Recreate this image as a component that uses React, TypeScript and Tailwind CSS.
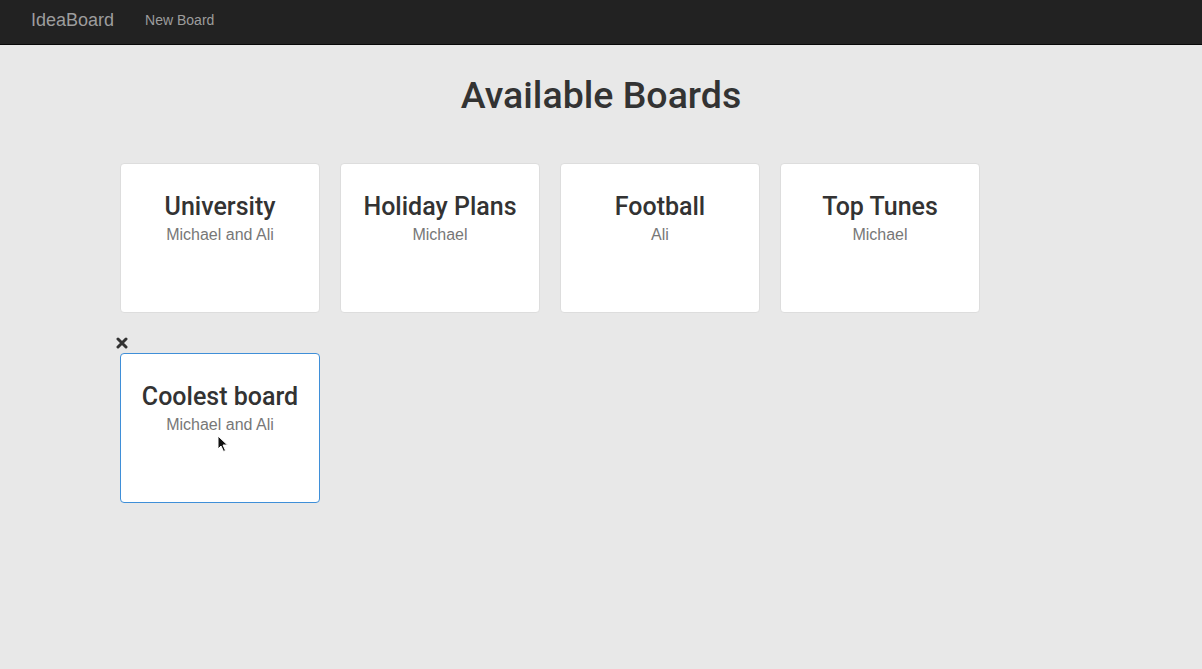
const boards = [
  { title: "University", owners: "Michael and Ali" },
  { title: "Holiday Plans", owners: "Michael" },
  { title: "Football", owners: "Ali" },
  { title: "Top Tunes", owners: "Michael" },
  { title: "Coolest board", owners: "Michael and Ali", active: true },
];

function CloseIcon() {
  return (
    <svg width="12" height="12" viewBox="0 0 12 12">
      <path d="M2 2 L10 10 M10 2 L2 10" stroke="#333" strokeWidth="3" strokeLinecap="round" />
    </svg>
  );
}

function Cursor() {
  return (
    <svg width="12" height="18" viewBox="0 0 12 18" className="absolute left-[96px] top-[81px]">
      <path d="M1 1 L1 14 L4 11 L6.5 16.5 L8.5 15.5 L6 10 L10.5 10 Z" fill="#111" stroke="#fff" strokeWidth="1" />
    </svg>
  );
}

export default function App() {
  return (
    <div className="min-h-[669px] w-full bg-[#e8e8e8] font-['Liberation_Sans',Arial,sans-serif]">
      {/* navbar */}
      <nav className="flex h-[45px] items-center border-b border-[#080808] bg-[#222] px-[31px] pb-[4px]">
        <span className="text-[18px] text-[#9d9d9d]">IdeaBoard</span>
        <span className="ml-[31px] text-[14px] text-[#9d9d9d]">New Board</span>
      </nav>

      <h1 className="mt-[30px] text-center font-['Roboto',sans-serif] text-[37.5px] font-medium leading-[40px] text-[#333]">
        Available Boards
      </h1>

      <div className="mt-[28px] grid grid-cols-[repeat(4,200px)] gap-x-[20px] gap-y-[20px] pl-[120px]">
        {boards.map((b) => (
          <div key={b.title} className="flex flex-col">
            <div className="flex h-5 items-center">
              {b.active && (
                <span className="-ml-[4px]">
                  <CloseIcon />
                </span>
              )}
            </div>
            <div
              className={
                b.active
                  ? "relative h-[150px] rounded border border-[#3f8fd8] bg-white pt-[30px] text-center"
                  : "relative h-[150px] rounded border border-[#ddd] bg-white pt-[30px] text-center"
              }
            >
              <div className="font-['Roboto',sans-serif] text-[25px] font-medium leading-[26px] text-[#333]">{b.title}</div>
              <div className="mt-[4px] text-[16px] leading-[22px] text-[#777]">{b.owners}</div>
              {b.active && <Cursor />}
            </div>
          </div>
        ))}
      </div>
    </div>
  );
}
